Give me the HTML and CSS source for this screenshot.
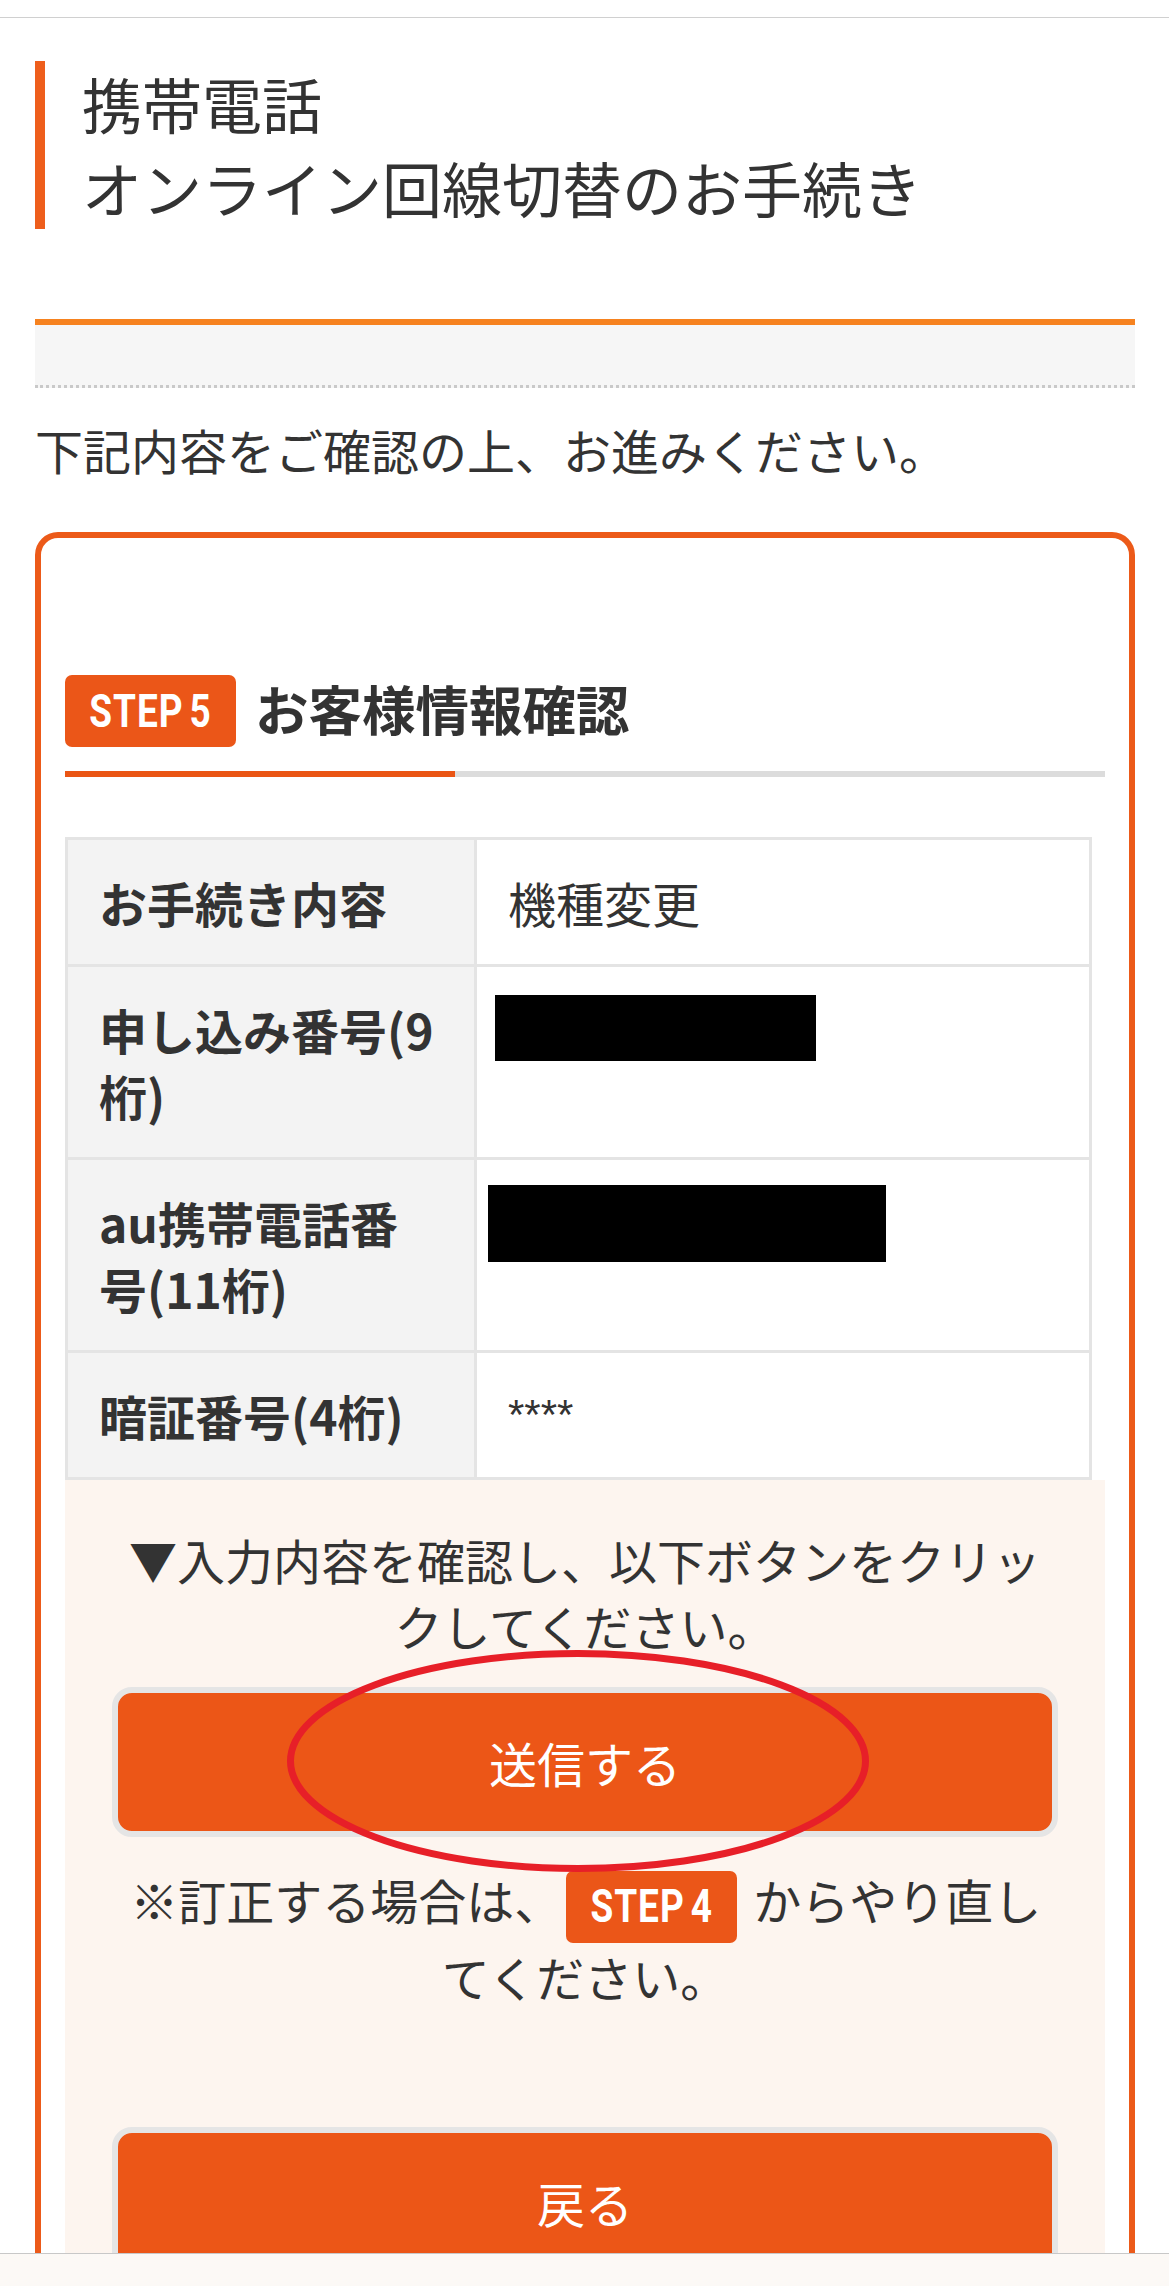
FILE: index.html
```html
<!DOCTYPE html>
<html lang="ja">
<head>
<meta charset="utf-8">
<title>オンライン回線切替のお手続き</title>
<link rel="stylesheet" href="styles.css">
</head>
<body>
<div class="topbar"></div>
<main class="page">
  <h1 class="page-title">携帯電話<br>オンライン回線切替のお手続き</h1>
  <div class="notice-box"></div>
  <p class="lead">下記内容をご確認の上、お進みください。</p>

  <section class="card">
    <div class="step-head">
      <span class="step-badge"><span class="step-label">STEP<span class="step-num">5</span></span></span>
      <h2 class="step-title">お客様情報確認</h2>
    </div>
    <div class="progress"><div class="progress-fill" style="width:37.5%"></div></div>

    <table class="info">
      <tr><th>お手続き内容</th><td>機種変更</td></tr>
      <tr><th>申し込み番号(9桁)</th><td class="masked"><span class="mask mask-a"></span></td></tr>
      <tr><th>au携帯電話番号(11桁)</th><td class="masked"><span class="mask mask-b"></span></td></tr>
      <tr><th>暗証番号(4桁)</th><td class="pin">****</td></tr>
    </table>

    <div class="confirm">
      <p class="confirm-text">▼入力内容を確認し、以下ボタンをクリックしてください。</p>
      <div class="btn-wrap">
        <button class="btn" type="button">送信する</button>
        <svg class="annot" width="582" height="222" viewBox="0 0 582 222" aria-hidden="true"><ellipse cx="291" cy="111" rx="287.5" ry="107.5" fill="none" stroke="#e71f28" stroke-width="7"/></svg>
      </div>
      <p class="note"><span>※訂正する場合は、</span><span class="step-badge inline"><span class="step-label">STEP<span class="step-num">4</span></span></span><span>からやり直し</span><span>てください。</span></p>
      <button class="btn back" type="button">戻る</button>
    </div>
  </section>
</main>
<div class="bottombar"></div>
</body>
</html>
```
FILE: styles.css
```css
* { box-sizing: border-box; }
html, body { margin: 0; padding: 0; background: #fff; }
body {
  font-family: "Noto Sans CJK JP", "Noto Sans", sans-serif;
  color: #333;
  font-size: 48px;
  line-height: 66px;
}
.topbar { height: 18px; border-bottom: 1px solid #d0d0d0; background: #fff; }
.page { padding: 0 34px 200px 35px; }

.page-title {
  margin: 43px 0 0;
  border-left: 10px solid #ee5e1c;
  padding-left: 37px;
  font-size: 60px;
  line-height: 84px;
  font-weight: 400;
  color: #333;
}
.notice-box {
  margin-top: 90px;
  height: 69px;
  border-top: 6px solid #f6821f;
  border-bottom: 3px dotted #c9c9c9;
  background: #f6f6f6;
}
.lead { margin: 28px 0 0; }

.card {
  margin-top: 50px;
  border: 6px solid #ec5a19;
  border-radius: 23px;
  padding: 137px 24px 0;
}
.step-head { display: flex; align-items: center; height: 72px; }
.step-badge {
  display: inline-flex;
  align-items: center;
  justify-content: center;
  width: 171px;
  height: 72px;
  background: #eb5618;
  border-radius: 7px;
  color: #fff;
  flex: none;
}
.step-label {
  display: inline-block;
  font-family: Roboto, "Liberation Sans", sans-serif;
  font-weight: 700;
  font-size: 37px;
  line-height: 1;
  letter-spacing: 1px;
  transform: scaleY(1.27);
}
.step-num { margin-left: 6px; }
.step-title {
  margin: -6px 0 0 19px;
  font-size: 53.5px;
  line-height: 72px;
  font-weight: 700;
  color: #333;
}
.progress { margin-top: 24px; height: 6px; background: #dcdcdc; }
.progress-fill { height: 100%; background: #ea5514; }

.info {
  width: 1027px;
  margin-top: 60px;
  border-collapse: separate;
  border-spacing: 0;
  border-top: 3px solid #e4e4e4;
  border-left: 3px solid #e4e4e4;
}
.info th, .info td {
  border-right: 3px solid #e4e4e4;
  border-bottom: 3px solid #e4e4e4;
  padding: 29px 31px;
  text-align: left;
  vertical-align: top;
  font-size: 48px;
  line-height: 66px;
}
.info th { width: 409px; padding-right: 35px; background: #f3f3f3; font-weight: 700; color: #333; }
.info td { font-weight: 400; background: #fff; }
.masked { position: relative; }
.mask { position: absolute; background: #000; }
.mask-a { left: 18px; top: 28px; width: 321px; height: 66px; }
.mask-b { left: 11px; top: 25px; width: 398px; height: 77px; }
.info td.pin { font-family: "Liberation Sans", Arial, sans-serif; font-size: 42px; }

.confirm {
  background: #fdf5ef;
  padding: 46px 47px 300px;
  text-align: center;
}
.confirm-text { margin: 0; }
.btn-wrap { position: relative; margin-top: 29px; }
.btn {
  display: block;
  width: 100%;
  height: 150px;
  border: 6px solid #e5e5e5;
  border-radius: 20px;
  background: #ec5617;
  color: #fff;
  font: inherit;
  font-size: 48px;
  padding: 0;
}
.annot { position: absolute; left: 175px; top: -37px; pointer-events: none; }
.note { margin: 29px 0 0; }
.step-badge.inline { vertical-align: middle; margin: 0 16px 0 4px; }
.btn.back { margin-top: 118px; }

.bottombar {
  position: fixed;
  left: 0;
  right: 0;
  bottom: 0;
  height: 33px;
  border-top: 1px solid #c8c8c8;
  background: #fcf9f6;
}
```
